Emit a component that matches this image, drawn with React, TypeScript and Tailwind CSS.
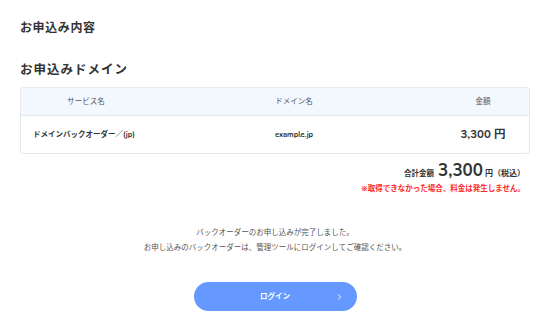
import { ChevronRight } from "lucide-react"

const font = "font-['Nunito','Noto_Sans','Noto_Sans_CJK_JP',sans-serif]"

export default function App() {
  return (
    <div className={`w-[550px] h-[329px] bg-white text-[#333] ${font}`}>
      <div className="px-5 pt-[20px]">
        <h2 className="text-[12px] font-bold leading-[16px] tracking-[0.05em]">お申込み内容</h2>
        <h3 className="mt-[26px] text-[12.5px] font-bold leading-[16px] tracking-[0.08em]">お申込みドメイン</h3>

        {/* domain table */}
        <div className="mt-[9px] w-[510px] rounded-[3px] border border-[#e6e9ef] overflow-hidden">
          <div className="grid grid-cols-[130px_286px_1fr] h-[28px] items-center bg-[#f3f7fe] border-b border-[#e3e7ee] text-[7.5px] text-[#555]">
            <span className="text-center">サービス名</span>
            <span className="text-center">ドメイン名</span>
            <span className="text-center">金額</span>
          </div>
          <div className="grid grid-cols-[130px_286px_1fr] h-[37px] items-center text-[7.5px] font-bold text-[#333]">
            <span className="pl-3">ドメインバックオーダー／(jp)</span>
            <span className="text-center">example.jp</span>
            <span className="text-center text-[11.5px]">3,300 円</span>
          </div>
        </div>

        <div className="mt-[6px] flex items-baseline justify-end pr-[5px] text-[#333]">
          <span className="text-[7.5px] font-bold">合計金額</span>
          <span className="ml-1 text-[17px] font-bold leading-[22px]">3,300</span>
          <span className="ml-[2px] text-[8px] font-bold">円（税込）</span>
        </div>
        <p className="mt-[1px] text-right pr-[5px] text-[7.5px] font-bold text-[#ff2a2a]">
          ※取得できなかった場合、料金は発生しません。
        </p>

        <div className="mt-[31px] text-center text-[7.5px] leading-[15px] text-[#555]">
          <p>バックオーダーのお申し込みが完了しました。</p>
          <p>お申し込みのバックオーダーは、管理ツールにログインしてご確認ください。</p>
        </div>

        <div className="mt-[27px] flex justify-center">
          <button className="relative w-[163px] h-[29px] rounded-full bg-[#6699ff] text-white text-[7.5px] font-bold flex items-center justify-center">
            ログイン
            <ChevronRight className="absolute right-[13px] top-1/2 -translate-y-1/2 w-[9px] h-[9px]" strokeWidth={2.5} />
          </button>
        </div>
      </div>
    </div>
  )
}
